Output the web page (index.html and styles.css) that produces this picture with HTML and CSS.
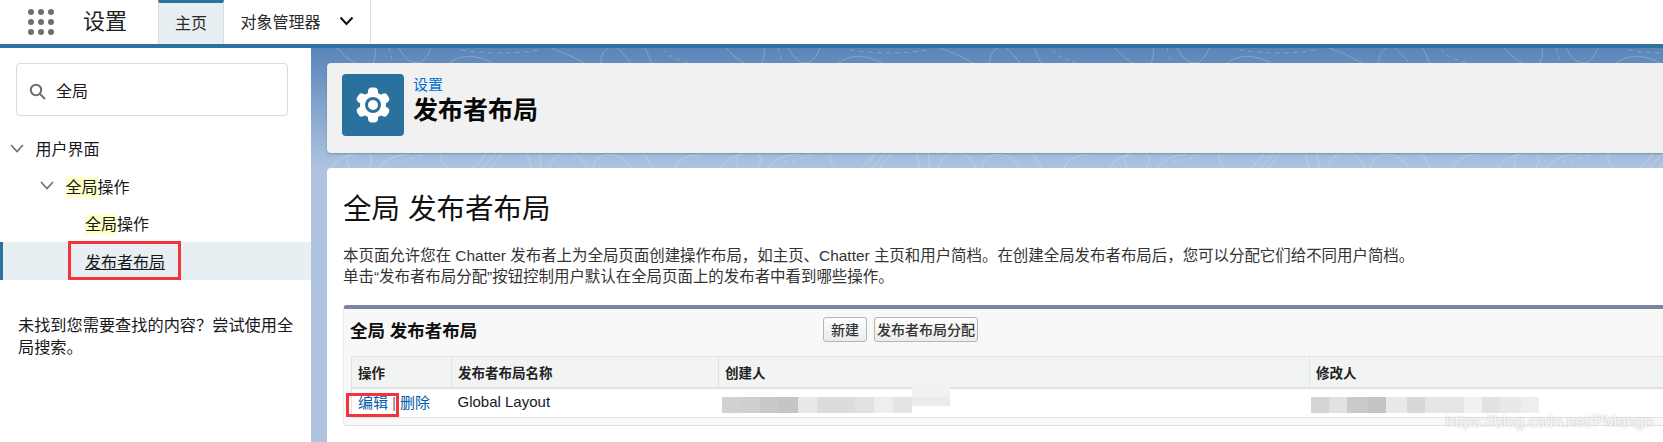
FILE: index.html
```html
<!DOCTYPE html>
<html lang="zh">
<head>
    <meta charset="utf-8">
    <title>发布者布局</title>
    <link rel="stylesheet" href="styles.css">
</head>
<body>
    <header class="topbar">
        <svg class="launcher" width="26" height="26" viewBox="0 0 26 26">
            <g fill="#706e6b">
                <circle cx="3" cy="3" r="3"/><circle cx="13" cy="3" r="3"/><circle cx="23" cy="3" r="3"/>
                <circle cx="3" cy="13" r="3"/><circle cx="13" cy="13" r="3"/><circle cx="23" cy="13" r="3"/>
                <circle cx="3" cy="23" r="3"/><circle cx="13" cy="23" r="3"/><circle cx="23" cy="23" r="3"/>
            </g>
        </svg>
        <div class="appname">设置</div>
        <div class="tab tab-active">主页</div>
        <div class="tab tab-menu">
            对象管理器
            <svg width="15" height="10" viewBox="0 0 15 10">
                <path d="M1.5 1.5 L7.5 8 L13.5 1.5" fill="none" stroke="#111" stroke-width="2"/>
            </svg>
        </div>
    </header>

    <div class="content">
        <aside class="sidebar">
            <div class="search">
                <svg width="17" height="17" viewBox="0 0 17 17">
                    <circle cx="7" cy="7" r="5.2" fill="none" stroke="#706e6b" stroke-width="2"/>
                    <path d="M11 11 L16 16" stroke="#706e6b" stroke-width="2"/>
                </svg>
                <span>全局</span>
            </div>
            <ul class="tree">
                <li class="tree-row level-1">
                    <svg class="caret" width="14" height="9" viewBox="0 0 14 9">
                        <path d="M1 1 L7 7.5 L13 1" fill="none" stroke="#706e6b" stroke-width="1.6"/>
                    </svg>
                    用户界面
                </li>
                <li class="tree-row level-2">
                    <svg class="caret" width="14" height="9" viewBox="0 0 14 9">
                        <path d="M1 1 L7 7.5 L13 1" fill="none" stroke="#706e6b" stroke-width="1.6"/>
                    </svg>
                    <span><mark>全局</mark>操作</span>
                </li>
                <li class="tree-row level-3"><span><mark>全局</mark>操作</span></li>
                <li class="tree-row level-3 tree-selected">
                    <a href="#">发布者布局</a>
                    <div class="redbox redbox-nav"></div>
                </li>
            </ul>
            <p class="help">未找到您需要查找的内容？尝试使用全局搜索。</p>
        </aside>

        <main class="main">
            <svg class="texture" width="100%" height="100%">
                <defs>
                    <pattern id="contours" width="389" height="394" patternUnits="userSpaceOnUse">
                        <g fill="none" stroke="#fff" stroke-opacity=".22" stroke-width="1">
                            <path d="M26 0 Q36 12 50 18"/>
                            <path d="M64 0 Q66 10 60 18"/>
                            <path d="M78 0 L82 14" stroke-dasharray="4 4"/>
                            <path d="M88 0 Q96 15 106 15 Q114 15 120 0"/>
                            <path d="M134 18 Q150 4 170 10 Q180 13 190 20"/>
                            <path d="M150 2 Q190 8 228 2" stroke-dasharray="5 4"/>
                            <path d="M240 0 Q268 10 280 20"/>
                            <path d="M290 20 Q288 4 298 0"/>
                            <path d="M306 0 Q316 8 322 18"/>
                            <path d="M334 0 L342 18"/>
                            <path d="M352 2 Q362 12 380 15" stroke-dasharray="4 4"/>
                            <path d="M20 120 Q28 108 44 106"/>
                            <path d="M38 120 Q32 108 42 104"/>
                            <path d="M56 104 Q64 110 58 120"/>
                            <path d="M68 120 Q76 108 98 106"/>
                            <path d="M84 114 Q100 112 112 106" stroke-dasharray="4 4"/>
                            <path d="M132 104 Q126 112 136 120"/>
                            <path d="M162 120 Q172 112 176 104"/>
                            <path d="M172 120 L186 104"/>
                            <path d="M180 120 L192 104"/>
                            <path d="M216 104 L220 120"/>
                            <path d="M228 104 L230 120"/>
                            <path d="M238 120 Q244 104 258 104 Q270 106 276 120"/>
                            <path d="M282 120 Q284 106 300 106 Q312 108 320 120"/>
                            <path d="M332 104 L342 120"/>
                            <path d="M364 120 Q368 108 389 106"/>
                        </g>
                    </pattern>
                </defs>
                <rect width="100%" height="100%" fill="url(#contours)"/>
            </svg>

            <section class="page-header">
                <div class="page-icon">
                    <svg width="36" height="36" viewBox="-18 -18 36 36">
                        <g fill="#fff">
                            <circle r="13"/>
                            <rect x="-5" y="-17.5" width="10" height="10" rx="4"/>
                            <rect x="-5" y="-17.5" width="10" height="10" rx="4" transform="rotate(60)"/>
                            <rect x="-5" y="-17.5" width="10" height="10" rx="4" transform="rotate(120)"/>
                            <rect x="-5" y="-17.5" width="10" height="10" rx="4" transform="rotate(180)"/>
                            <rect x="-5" y="-17.5" width="10" height="10" rx="4" transform="rotate(240)"/>
                            <rect x="-5" y="-17.5" width="10" height="10" rx="4" transform="rotate(300)"/>
                        </g>
                        <circle r="8" fill="#2b719e"/>
                        <circle r="5" fill="#fff"/>
                    </svg>
                </div>
                <div class="page-title">
                    <a class="crumb" href="#">设置</a>
                    <h1>发布者布局</h1>
                </div>
            </section>

            <section class="card">
                <h2>全局 发布者布局</h2>
                <p class="intro">
                    本页面允许您在 Chatter 发布者上为全局页面创建操作布局，如主页、Chatter 主页和用户简档。在创建全局发布者布局后，您可以分配它们给不同用户简档。<br>
                    单击“发布者布局分配”按钮控制用户默认在全局页面上的发布者中看到哪些操作。
                </p>

                <div class="block">
                    <div class="block-head">
                        <h3>全局 发布者布局</h3>
                        <div class="block-buttons">
                            <button class="btn">新建</button>
                            <button class="btn btn-wide">发布者布局分配</button>
                        </div>
                    </div>
                    <table class="list">
                        <colgroup>
                            <col class="col-action">
                            <col class="col-name">
                            <col class="col-created">
                            <col>
                        </colgroup>
                        <tr>
                            <th>操作</th>
                            <th>发布者布局名称</th>
                            <th>创建人</th>
                            <th>修改人</th>
                        </tr>
                        <tr>
                            <td class="actions">
                                <a href="#">编辑</a> <span class="pipe">|</span> <a href="#">删除</a>
                                <div class="redbox redbox-edit"></div>
                            </td>
                            <td>Global Layout</td>
                            <td><div class="blur blur-created"></div></td>
                            <td><div class="blur blur-modified"></div></td>
                        </tr>
                    </table>
                </div>
            </section>

            <div class="watermark">https://blog.csdn.net/PMango</div>
        </main>
    </div>
</body>
</html>
```

FILE: styles.css
```css
* {
    box-sizing: border-box;
}
html, body {
    height: 100%;
}
body {
    margin: 0;
    overflow: hidden;
    font-family: "Liberation Sans", "Noto Sans CJK SC", sans-serif;
    font-size: 16px;
    color: #16181c;
    background: #fff;
}

/* top bar */
.topbar {
    display: flex;
    align-items: stretch;
    height: 48px;
    border-bottom: 4px solid #2b739f;
}
.launcher {
    margin: 9px 0 0 28px;
}
.appname {
    width: 75px;
    margin-left: 29px;
    font-size: 22px;
    line-height: 44px;
    color: #222;
}
.tab {
    display: flex;
    align-items: center;
    justify-content: center;
    font-size: 16px;
    color: #2b2b2b;
    border-right: 1px solid #dddbda;
}
.tab-active {
    width: 66px;
    padding-bottom: 3px;
    border-left: 1px solid #dddbda;
    border-top: 3px solid #2b739f;
    background: #e8eff3;
}
.tab-menu {
    width: 147px;
    gap: 18px;
    padding-bottom: 2px;
}

.content {
    display: flex;
    height: 394px;
}

/* left nav */
.sidebar {
    width: 311px;
    flex: none;
    background: #fff;
}
.search {
    display: flex;
    align-items: center;
    gap: 10px;
    height: 53px;
    margin: 15px 23px 0 16px;
    padding-left: 12px;
    border: 1px solid #dddbda;
    border-radius: 4px;
}
.search svg {
    margin-top: 4px;
}
.tree {
    list-style: none;
    margin: 13.5px 0 0;
    padding: 0;
}
.tree-row {
    position: relative;
    display: flex;
    align-items: center;
    height: 37.5px;
    white-space: nowrap;
}
.level-1 {
    padding-left: 10px;
}
.level-2 {
    padding-left: 40px;
}
.level-3 {
    padding-left: 85px;
}
.caret {
    margin-right: 11.5px;
}
mark {
    background: #ffffc8;
    color: inherit;
    padding: 2px 0;
}
.tree-selected {
    background: #e8eff3;
    border-left: 3px solid #2b739f;
    padding-left: 82px;
}
.tree-selected a {
    color: #16181c;
    text-decoration: underline;
}
.help {
    margin: 34px 12px 0 18px;
    font-size: 16.2px;
    line-height: 22px;
}

/* red marks on the screenshot */
.redbox {
    position: absolute;
    border: 3px solid #f4333a;
}
.redbox-nav {
    left: 65px;
    top: -1px;
    width: 113px;
    height: 39px;
}
.redbox-edit {
    left: -6px;
    top: 4px;
    width: 53px;
    height: 24px;
}

/* main area */
.main {
    position: relative;
    flex: 1;
    min-width: 0;
    overflow: hidden;
    padding: 15px 0 0 16px;
    background: linear-gradient(#5a85b9, #adc3e0 120px);
}
.texture {
    position: absolute;
    left: 0;
    top: 0;
}
.page-header {
    position: relative;
    display: flex;
    align-items: flex-start;
    gap: 9px;
    height: 90px;
    padding: 11px 0 0 15px;
    background: #f1f1f1;
    border-radius: 4px 0 0 4px;
    box-shadow: 0 1px 2px rgba(0, 0, 0, .25);
}
.page-icon {
    display: flex;
    align-items: center;
    justify-content: center;
    width: 62px;
    height: 62px;
    background: #2b719e;
    border-radius: 4px;
}
.page-title {
    padding-top: 2px;
}
.crumb {
    display: block;
    font-size: 15px;
    line-height: 18px;
    color: #0070d2;
    text-decoration: none;
}
h1 {
    margin: 0;
    font-size: 25px;
    line-height: 32px;
    color: #080707;
}
.card {
    position: relative;
    height: 300px;
    margin-top: 15px;
    padding: 21px 0 0 16px;
    background: #fff;
    border-radius: 4px 0 0 0;
}
h2 {
    margin: 0;
    font-size: 28.5px;
    font-weight: normal;
    line-height: 40px;
    color: #111;
}
.intro {
    margin: 17px 0 0;
    font-size: 15.45px;
    line-height: 20.5px;
    color: #333;
    white-space: nowrap;
}
.block {
    height: 121px;
    margin-top: 18px;
    padding-left: 7px;
    background: #f8f8f8;
    border-top: 4px solid #7a85a0;
    border-bottom: 1px solid #e0e0e0;
    border-left: 1px solid #eaeaea;
    border-radius: 4px 0 0 4px;
}
.block-head {
    display: flex;
    align-items: center;
    height: 47px;
}
h3 {
    width: 473px;
    margin: 0 0 6px -1px;
    font-size: 17.5px;
    font-weight: bold;
    color: #111;
}
.block-buttons {
    display: flex;
    gap: 7px;
    margin-bottom: 7px;
}
.btn {
    height: 25px;
    padding: 0 7px;
    font: 14px "Liberation Sans", "Noto Sans CJK SC", sans-serif;
    font-weight: 500;
    color: #333;
    background: linear-gradient(#fdfdfd, #ececec);
    border: 1px solid #b5b5b5;
    border-radius: 3px;
}
.btn-wide {
    padding: 0 2px;
}
.list {
    width: 100%;
    table-layout: fixed;
    border-collapse: collapse;
    font-size: 14px;
}
.col-action {
    width: 100px;
}
.col-name {
    width: 267px;
}
.col-created {
    width: 591px;
}
.list th {
    height: 31px;
    padding: 0 6px;
    text-align: left;
    font-size: 13.5px;
    color: #222;
    background: #f2f3f3;
    border-top: 1px solid #e0e3e5;
    border-bottom: 2px solid #e0e3e5;
    border-left: 1px solid #e0e3e5;
}
.list td {
    height: 30px;
    padding: 0 6px 2px;
    font-size: 15px;
    background: #fff;
    border-bottom: 1px solid #e0e3e5;
}
.list td:first-child, .list th:first-child {
    border-left: 1px solid #e0e3e5;
}
.actions {
    position: relative;
    white-space: nowrap;
}
.actions a {
    color: #015ba7;
    text-decoration: none;
}
.pipe {
    color: #666;
    font-size: 14px;
}

/* blurred-out user names */
.blur {
    position: relative;
    height: 16px;
    margin: 6px 0 0 -3px;
}
.blur-created {
    width: 190px;
    background: linear-gradient(90deg,
        #d3d1cf 0 10%, #cdd0cd 10% 20%, #cbc8c8 20% 30%, #c5c5c7 30% 40%, #e8e8e8 40% 50%,
        #dcdcdc 50% 60%, #dcdcde 60% 70%, #e2e2e4 70% 80%, #eeeeec 80% 90%, #e3e4e3 90% 100%);
}
.blur-created::after {
    content: "";
    position: absolute;
    left: 100%;
    top: -12px;
    width: 38px;
    height: 21px;
    background: linear-gradient(#f1f1f1 0 57%, #ebebec 57% 100%);
    border-radius: 6px 0 0 0;
}
.blur-modified {
    width: 228px;
    margin-left: -5px;
    background: linear-gradient(90deg,
        #d6d5d5 0 8%, #e1e1e1 8% 16%, #cbcaca 16% 25%, #c5c3c3 25% 33%, #e9e9e7 33% 42%,
        #d8d8da 42% 50%, #e5e5e5 50% 67%, #f1f1f0 67% 75%, #e2e2e0 75% 83%, #e8e8e8 83% 92%, #eeeef1 92% 100%);
}
.watermark {
    position: absolute;
    right: 10px;
    top: 365px;
    font-size: 16px;
    color: rgba(255, 255, 255, .85);
    text-shadow: 0 0 2px #b5b5b5;
}
```
